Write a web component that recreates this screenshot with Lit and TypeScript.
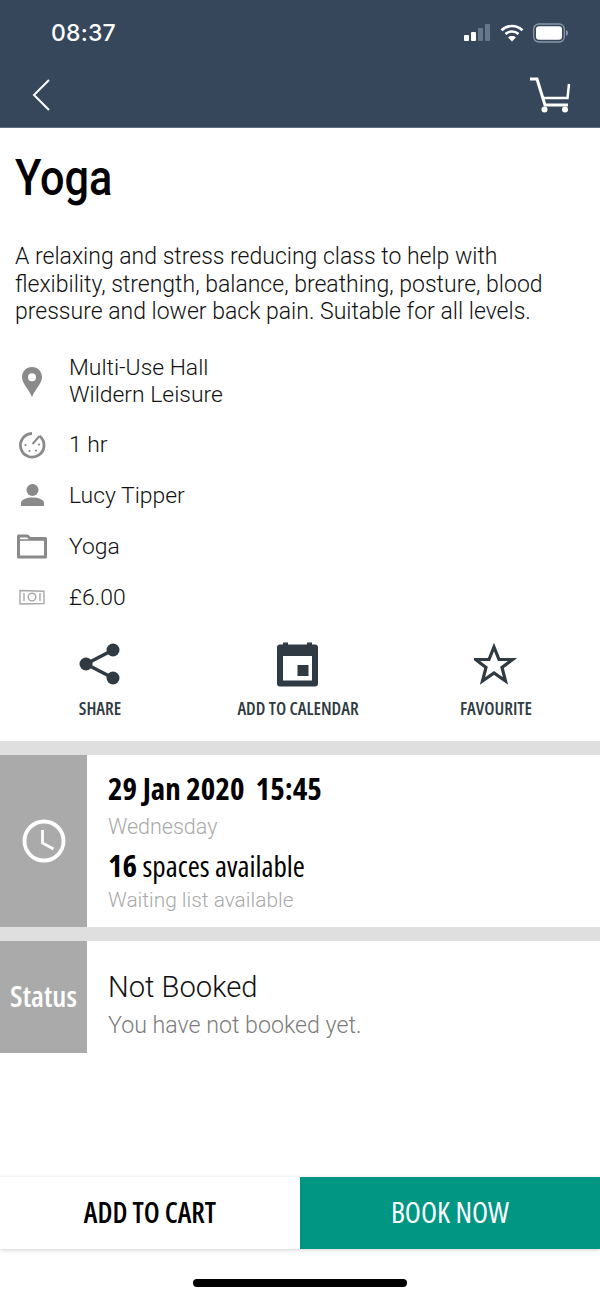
import { LitElement, css, html } from 'lit'
import { customElement } from 'lit/decorators.js'

const rows = [
  { icon: 'pin', lines: ['Multi-Use Hall', 'Wildern Leisure'] },
  { icon: 'timer', lines: ['1 hr'] },
  { icon: 'person', lines: ['Lucy Tipper'] },
  { icon: 'folder', lines: ['Yoga'] },
  { icon: 'money', lines: ['£6.00'] },
]

@customElement('app-root')
export class AppRoot extends LitElement {
  private metaIcon(name: string) {
    switch (name) {
      case 'pin':
        return html`<svg width="30" height="34" viewBox="0 0 30 34">
          <path fill="#8a8a8a" fill-rule="evenodd" d="M15 3C9 3 5 7.600 5 13c0 6.500 6.500 11.500 10 20 3.500-8.500 10-13.500 10-20C25 7.600 21 3 15 3zM15 9.300a4 4 0 1 1 0 8 4 4 0 0 1 0-8z"/>
        </svg>`
      case 'timer':
        return html`<svg width="30" height="30" viewBox="0 0 30 30" fill="none">
          <path stroke="#8a8a8a" stroke-width="2.800" d="M15 3.500A11.800 11.800 0 1 0 22.500 6"/>
          <path stroke="#8a8a8a" stroke-width="2" d="M22.500 6L15.500 14"/>
          <circle cx="8.500" cy="15" r="1.100" fill="#8a8a8a"/><circle cx="12.500" cy="21" r="1.100" fill="#8a8a8a"/><circle cx="19" cy="20.500" r="1.100" fill="#8a8a8a"/><circle cx="22" cy="14.500" r="1.100" fill="#8a8a8a"/>
        </svg>`
      case 'person':
        return html`<svg width="30" height="28" viewBox="0 0 30 28">
          <circle cx="15.500" cy="8" r="6" fill="#8a8a8a"/>
          <path fill="#8a8a8a" d="M4 24v-3c0-3.600 6-5.500 11.500-5.500S27 17.400 27 21v3z"/>
        </svg>`
      case 'folder':
        return html`<svg width="30" height="26" viewBox="0 0 30 26" fill="none">
          <path stroke="#8a8a8a" stroke-width="3" stroke-linejoin="round" d="M1.500 3h9l2.500 2.500h15.500v18.500h-27z"/>
          <path stroke="#8a8a8a" stroke-width="1.600" d="M2 7h26"/>
        </svg>`
      default:
        return html`<svg width="30" height="18" viewBox="0 0 30 18" fill="none" stroke="#a8a8a8">
          <path stroke-width="1.400" d="M3 2.500l24 .8v12.200l-24 .5z"/>
          <circle cx="15" cy="9" r="3.800" stroke-width="1.400"/>
          <path stroke-width="1.400" d="M7 5v8M23 5v8"/>
        </svg>`
    }
  }

  render() {
    return html`
      <header class="top">
        <div class="status-bar">
          <span class="time">08:37</span>
          <span class="indicators">
            <svg width="27" height="18" viewBox="0 0 27 18">
              <rect x="0" y="11" width="5" height="6" rx="1" fill="#fff"/>
              <rect x="7" y="8" width="5" height="9" rx="1" fill="#fff"/>
              <rect x="14" y="4" width="5" height="13" rx="1" fill="#66778b"/>
              <rect x="21" y="0" width="5" height="17" rx="1" fill="#66778b"/>
            </svg>
            <svg width="24" height="18" viewBox="0 0 24 18" fill="none" stroke="#fff" stroke-width="2.600">
              <path d="M1.500 6.200C7.500.6 16.500.6 22.500 6.200"/>
              <path d="M5.500 10c3.700-3.300 9.300-3.300 13 0"/>
              <path fill="#fff" stroke="none" d="M12 17.500l-4-4.200c2.300-1.900 5.700-1.900 8 0z"/>
            </svg>
            <svg width="35" height="20" viewBox="0 0 35 20">
              <rect x=".7" y="1" width="30.600" height="18" rx="5" fill="none" stroke="#8b98a8" stroke-width="1.300"/>
              <rect x="3" y="3.300" width="26" height="13.400" rx="3" fill="#fff"/>
              <path d="M33 7v6c1.200-.4 2-1.600 2-3s-.8-2.600-2-3z" fill="#8b98a8"/>
            </svg>
          </span>
        </div>
        <div class="nav">
          <svg width="20" height="32" viewBox="0 0 20 32" fill="none" stroke="#fff" stroke-width="2">
            <path d="M17 1L2 16l15 15"/>
          </svg>
          <svg width="42" height="36" viewBox="0 0 42 36" fill="none" stroke="#fff">
            <path stroke-width="3" d="M1 2h7l8 26h23"/>
            <path stroke-width="2.500" d="M40 7l-1.500 14H13"/>
            <circle cx="15.500" cy="32.500" r="3" fill="#fff" stroke="none"/>
            <circle cx="36" cy="32.500" r="3" fill="#fff" stroke="none"/>
          </svg>
        </div>
      </header>

      <main>
        <h1>Yoga</h1>
        <p class="desc">
          A relaxing and stress reducing class to help with<br />
          flexibility, strength, balance, breathing, posture, blood<br />
          pressure and lower back pain. Suitable for all levels.
        </p>

        <ul class="meta">
          ${rows.map(
            (r) => html`<li>
              <span class="meta-icon">${this.metaIcon(r.icon)}</span>
              <span>${r.lines.map((l) => html`<div>${l}</div>`)}</span>
            </li>`,
          )}
        </ul>

        <div class="actions">
          <div class="action">
            <svg width="44" height="46" viewBox="0 0 44 46" fill="none">
              <path stroke="#2f3a42" stroke-width="3.500" d="M35 9L8 23l27 14"/>
              <circle cx="35" cy="9" r="6.500" fill="#2f3a42"/>
              <circle cx="8" cy="23" r="6.500" fill="#2f3a42"/>
              <circle cx="35" cy="37" r="6.500" fill="#2f3a42"/>
            </svg>
            <span>SHARE</span>
          </div>
          <div class="action">
            <svg width="42" height="46" viewBox="0 0 42 46">
              <path fill="#2f3a42" d="M6 1.500h5v2h19v-2h5v2h3a3 3 0 0 1 3 3v36a3 3 0 0 1-3 3H3a3 3 0 0 1-3-3v-36a3 3 0 0 1 3-3h3z"/>
              <rect x="6" y="15" width="29" height="24.500" fill="#fff"/>
              <rect x="20.500" y="24" width="11" height="11" fill="#2f3a42"/>
            </svg>
            <span>ADD TO CALENDAR</span>
          </div>
          <div class="action">
            <svg width="44" height="46" viewBox="0 0 44 46" fill="none">
              <path stroke="#2f3a42" stroke-width="3.200" d="M20 6l5 12.500h13.500L28 26.500l3.500 13.500L20 32 8.500 40 12 26.500 1.500 18.500H15z"/>
            </svg>
            <span>FAVOURITE</span>
          </div>
        </div>

        <section class="band when">
          <div class="side">
            <svg width="44" height="44" viewBox="0 0 44 44" fill="none" stroke="#fff">
              <circle cx="22" cy="22" r="19.500" stroke-width="3.800"/>
              <path stroke-width="2.800" d="M20.500 11v13l11 6"/>
            </svg>
          </div>
          <div class="body">
            <div class="date">29 Jan 2020&nbsp;&nbsp;15:45</div>
            <div class="sub day">Wednesday</div>
            <div class="spaces"><b>16</b> spaces available</div>
            <div class="sub wait">Waiting list available</div>
          </div>
        </section>

        <section class="band status">
          <div class="side">Status</div>
          <div class="body">
            <div class="state">Not Booked</div>
            <div class="note">You have not booked yet.</div>
          </div>
        </section>
      </main>

      <footer>
        <div class="cta cart">ADD TO CART</div>
        <div class="cta book">BOOK NOW</div>
      </footer>
      <div class="home"><i></i></div>
    `
  }

  static styles = css`
    :host {
      display: flex;
      flex-direction: column;
      width: 600px;
      height: 1299px;
      overflow: hidden;
      background: #fff;
      color: #111;
      font-family: Roboto, sans-serif;
    }
    .top {
      height: 128px;
      box-sizing: border-box;
      background: #36475c;
      border-bottom: 1px solid #5d7083;
      color: #fff;
    }
    .status-bar {
      display: flex;
      justify-content: space-between;
      align-items: center;
      height: 24px;
      padding: 21px 32px 0 51px;
    }
    .time {
      font: 500 23px/24px Inter, sans-serif;
      letter-spacing: 0.2px;
    }
    .indicators {
      display: flex;
      align-items: center;
      gap: 9px;
    }
    .nav {
      display: flex;
      justify-content: space-between;
      align-items: center;
      padding: 32px 29px 0 32px;
    }
    main {
      flex: 1;
      display: flex;
      flex-direction: column;
    }
    .action span,
    .date,
    .spaces,
    .side,
    .cta {
      font-family: 'Open Sans', 'Liberation Sans', sans-serif;
      font-stretch: 75%;
    }
    h1 {
      margin: 20px 0 0 15px;
      font: 500 50px/60px Roboto, sans-serif;
      color: #000;
      transform: scaleX(0.865);
      transform-origin: left center;
    }
    .desc {
      margin: 35px 15px 0;
      font: 300 23px/27.5px Roboto, sans-serif;
    }
    .meta {
      list-style: none;
      margin: 28px 0 0;
      padding: 0;
      font: 300 22.9px/27px Roboto, sans-serif;
    }
    .meta li {
      display: flex;
      align-items: center;
      min-height: 27px;
      margin-bottom: 23.8px;
    }
    .meta-icon {
      display: flex;
      justify-content: center;
      width: 34px;
      margin: 0 20px 0 15px;
      height: 27px;
      align-items: center;
    }
    .actions {
      display: grid;
      grid-template-columns: 200px 196px 200px;
      margin-top: 7px;
      height: 100px;
    }
    .action {
      display: flex;
      flex-direction: column;
      align-items: center;
      gap: 10px;
      color: #2f3a42;
    }
    .action span {
      font-size: 18px;
      line-height: 22px;
      font-weight: 600;
    }
    .band {
      display: flex;
      border-top: 14px solid #dfdfdf;
    }
    .side {
      flex: none;
      width: 87px;
      display: flex;
      align-items: center;
      justify-content: center;
      background: #a9aaa9;
      color: #fff;
      font-size: 29.5px;
      font-weight: 600;
    }
    .status .side {
      box-sizing: border-box;
      padding-bottom: 4px;
    }
    .body {
      padding-left: 21px;
    }
    .when {
      height: 172px;
    }
    .status {
      height: 112px;
    }
    .date {
      margin-top: 15px;
      font-size: 31px;
      line-height: 36px;
      font-weight: 700;
      color: #000;
    }
    .sub {
      font: 300 21.5px/26px Roboto, sans-serif;
      color: #a9a9a9;
    }
    .day {
      margin-top: 8px;
    }
    .spaces {
      margin-top: 7px;
      font-size: 29.2px;
      line-height: 36px;
      color: #000;
    }
    .spaces b {
      font-size: 31px;
      font-weight: 700;
    }
    .wait {
      margin-top: 3px;
      font-size: 20.9px;
    }
    .state {
      margin-top: 29px;
      font: 300 29.2px/34px Roboto, sans-serif;
    }
    .note {
      margin-top: 7px;
      font: 300 23.2px/28px Roboto, sans-serif;
      color: #7c7c7c;
    }
    footer {
      display: flex;
      height: 72px;
      box-shadow: 0 1px 4px rgba(0, 0, 0, 0.18);
    }
    .cta {
      width: 300px;
      box-sizing: border-box;
      padding-bottom: 3px;
      display: flex;
      align-items: center;
      justify-content: center;
      font-size: 28px;
    }
    .cart {
      background: #fff;
      color: #000;
      font-weight: 600;
    }
    .book {
      background: #009684;
      color: #fff;
      font-size: 29.5px;
    }
    .home {
      display: flex;
      justify-content: center;
      height: 50px;
      padding-top: 30px;
      box-sizing: border-box;
    }
    .home i {
      width: 214px;
      height: 8px;
      border-radius: 4px;
      background: #000;
    }
  `
}
